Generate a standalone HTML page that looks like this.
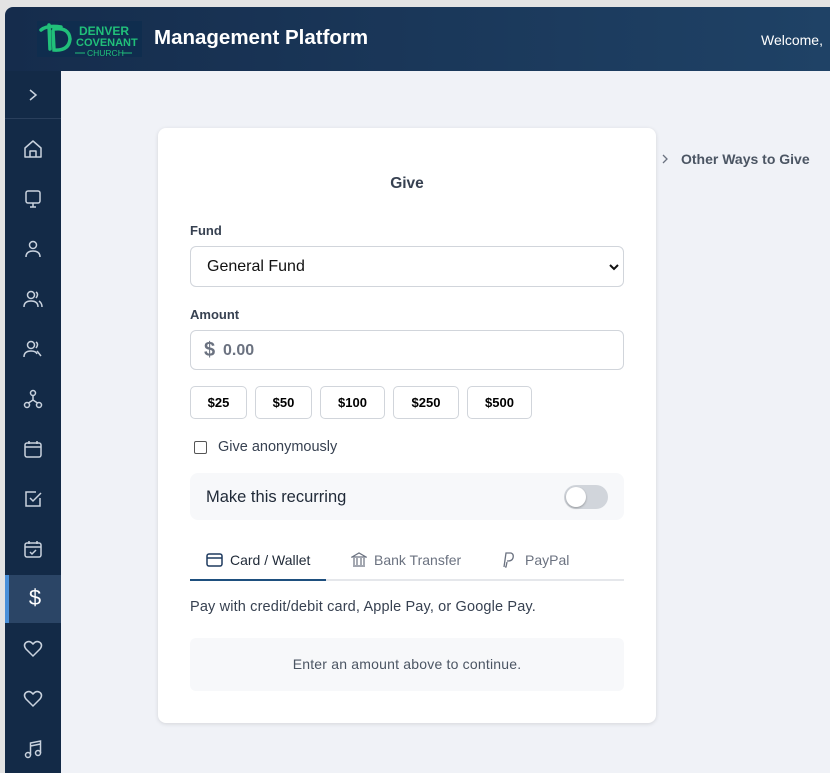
<!DOCTYPE html>
<html><head><meta charset="utf-8"><style>
*{box-sizing:border-box;margin:0;padding:0}
body{width:830px;height:773px;overflow:hidden;background:#e3e3e3;font-family:"Liberation Sans",sans-serif;position:relative}
.frame{position:absolute;left:5px;top:7px;right:0;bottom:0;background:#f0f2f7;border-top-left-radius:8px;overflow:hidden}
.hdr{position:absolute;left:0;top:0;right:0;height:64px;background:linear-gradient(90deg,#152c4c,#1f4266);}
.logo{position:absolute;left:32px;top:14px;width:105px;height:36px;background:#0f2d4e}
.title{position:absolute;left:149px;top:19px;color:#fff;font-weight:bold;font-size:20.5px}
.wel{position:absolute;left:756px;top:25px;color:#fff;font-size:14px}
.side{position:absolute;left:0;top:64px;width:56px;bottom:0;background:#132a47}
.side .tog{height:48px;border-bottom:1px solid #2a3f5c;display:flex;align-items:center;justify-content:center}
.card{position:absolute;left:153px;top:121px;width:498px;height:595px;background:#fff;border-radius:8px;box-shadow:0 1px 4px rgba(0,0,0,.12)}
.abs{position:absolute}
.lbl{font-size:13px;font-weight:bold;color:#374151}
.box{border:1px solid #d1d5db;border-radius:6px;background:#fff}
.btn{position:absolute;top:258px;height:33px;border:1px solid #d1d5db;border-radius:5px;font-size:13px;font-weight:bold;display:flex;align-items:center;justify-content:center;color:#000}
.other{position:absolute;left:656px;top:144px;font-size:14px;font-weight:bold;color:#4b5563}
</style></head><body>
<div class="frame">
<div class="hdr">
 <div class="logo">
  <svg width="105" height="36" viewBox="0 0 105 36"><path d="M4 9 Q10 4 24 6 M12 4 L13 28 M17 8 Q32 6 33 18 Q32 30 17 29 L16 10" fill="none" stroke="#21c07a" stroke-width="3.5" stroke-linecap="round"/>
  <text x="42" y="14" fill="#21c07a" font-size="12" font-weight="bold" font-family="Liberation Sans">DENVER</text>
  <text x="39" y="25" fill="#21c07a" font-size="11" font-weight="bold" font-family="Liberation Sans">COVENANT</text>
  <text x="50" y="35" fill="#21c07a" font-size="8.5" font-family="Liberation Sans">CHURCH</text>
  <path d="M38 32 H48 M85 32 H95" stroke="#21c07a"/></svg>
 </div>
 <div class="title">Management Platform</div>
 <div class="wel">Welcome,</div>
</div>
<div class="side">
 <div class="tog"><svg width="12" height="14"><path d="M3 2 L9 7 L3 12" fill="none" stroke="#c9d2de" stroke-width="1.5"/></svg></div>
</div>
<div class="card">
 <div class="abs" style="left:0;width:498px;top:47px;text-align:center;font-weight:bold;font-size:15.5px;color:#374151">Give</div>
 <div class="abs lbl" style="left:32px;top:95px">Fund</div>
 <div class="abs box" style="left:32px;top:118px;width:434px;height:41px"><span class="abs" style="left:16px;top:11px;font-size:16px;color:#111">General Fund</span><svg class="abs" style="right:4px;top:16px" width="10" height="8"><path d="M1 2 L5 6 L9 2" fill="none" stroke="#111" stroke-width="2"/></svg></div>
 <div class="abs lbl" style="left:32px;top:179px">Amount</div>
 <div class="abs box" style="left:32px;top:202px;width:434px;height:40px"><span class="abs" style="left:13px;top:8px;font-size:20px;font-weight:bold;color:#6b7280">$</span><span class="abs" style="left:32px;top:11px;font-size:16px;font-weight:bold;color:#6b7280">0.00</span></div>
 <div class="btn" style="left:32px;width:57px">$25</div>
 <div class="btn" style="left:97px;width:57px">$50</div>
 <div class="btn" style="left:162px;width:65px">$100</div>
 <div class="btn" style="left:235px;width:66px">$250</div>
 <div class="btn" style="left:309px;width:65px">$500</div>
 <div class="abs" style="left:36px;top:313px;width:13px;height:13px;border:1px solid #555;border-radius:2px"></div>
 <div class="abs" style="left:60px;top:311px;font-size:14.5px;color:#374151">Give anonymously</div>
 <div class="abs" style="left:32px;top:345px;width:434px;height:47px;background:#f7f8fa;border-radius:8px">
  <span class="abs" style="left:16px;top:15px;font-size:16.5px;color:#1f2937">Make this recurring</span>
  <div class="abs" style="left:374px;top:12px;width:44px;height:24px;border-radius:12px;background:#d1d5db"><div class="abs" style="left:2px;top:2px;width:20px;height:20px;border-radius:50%;background:#fff;box-shadow:0 1px 2px rgba(0,0,0,.3)"></div></div>
 </div>
 <div class="abs" style="left:32px;top:451px;width:434px;height:2px;background:#e5e7eb"></div>
 <div class="abs" style="left:32px;top:451px;width:136px;height:2px;background:#1e4f7e"></div>
 <svg class="abs" style="left:48px;top:425px" width="17" height="14"><rect x="1" y="1" width="15" height="12" rx="2" fill="none" stroke="#1e3a5f" stroke-width="1.5"/><path d="M1 5 H16" stroke="#1e3a5f" stroke-width="1.5"/></svg>
 <span class="abs" style="left:72px;top:424px;font-size:14px;color:#1f2937">Card / Wallet</span>
 <svg class="abs" style="left:193px;top:424px" width="16" height="16"><path d="M1 5 L8 1 L15 5 Z M2 14 H14 M3 6 V13 M6 6 V13 M10 6 V13 M13 6 V13" fill="none" stroke="#6b7280" stroke-width="1.2"/></svg>
 <span class="abs" style="left:216px;top:424px;font-size:14px;color:#6b7280">Bank Transfer</span>
 <svg class="abs" style="left:343px;top:423px" width="14" height="18"><path d="M3 16 L5 2 H10 Q13 3 12 7 Q11 10 7 10 H6 M4 16 H5 L6 11" fill="none" stroke="#6b7280" stroke-width="1.3"/></svg>
 <span class="abs" style="left:367px;top:424px;font-size:14px;color:#6b7280">PayPal</span>
 <div class="abs" style="left:32px;top:471px;font-size:14.5px;color:#374151;letter-spacing:0.15px">Pay with credit/debit card, Apple Pay, or Google Pay.</div>
 <div class="abs" style="left:32px;top:510px;width:434px;height:53px;background:#f7f8fa;border-radius:6px;text-align:center;line-height:53px;font-size:14px;color:#4b5563;letter-spacing:0.2px">Enter an amount above to continue.</div>
</div>
<svg class="abs" style="left:656px;top:146px" width="8" height="12"><path d="M2 2 L6 6 L2 10" fill="none" stroke="#6b7280" stroke-width="1.3"/></svg>
<div class="other" style="left:676px">Other Ways to Give</div>
</div>
<div id="icons" style="position:absolute;left:5px;top:0;width:56px;height:773px">
<svg class="abs" style="left:18px;top:139px" width="20" height="20" fill="none" stroke="#c9d2de" stroke-width="1.5" stroke-linejoin="round"><path d="M2 9 L10 2 L18 9 V18 H2 Z M7 18 V12 H13 V18"/></svg>
<svg class="abs" style="left:18px;top:189px" width="20" height="20" fill="none" stroke="#c9d2de" stroke-width="1.5"><rect x="3" y="2" width="14" height="12" rx="2"/><path d="M10 14 V18 M7 18 H13"/></svg>
<svg class="abs" style="left:18px;top:239px" width="20" height="20" fill="none" stroke="#c9d2de" stroke-width="1.5"><circle cx="10" cy="6" r="3.5"/><path d="M3 18 Q3 12 10 12 Q17 12 17 18"/></svg>
<svg class="abs" style="left:18px;top:289px" width="20" height="20" fill="none" stroke="#c9d2de" stroke-width="1.5"><circle cx="8" cy="6" r="3.5"/><path d="M1 18 Q1 12 8 12 Q15 12 15 18 M13 3 Q16 5 13 9 M16 12 Q19 14 19 18"/></svg>
<svg class="abs" style="left:18px;top:339px" width="20" height="20" fill="none" stroke="#c9d2de" stroke-width="1.5"><circle cx="8" cy="6" r="3.5"/><path d="M1 18 Q1 12 8 12 Q13 12 14 15 M13 3 Q16 5 13 9 M14 12 L18 17"/></svg>
<svg class="abs" style="left:18px;top:389px" width="20" height="20" fill="none" stroke="#c9d2de" stroke-width="1.5"><circle cx="10" cy="4" r="2.5"/><circle cx="4" cy="16" r="2.5"/><circle cx="16" cy="16" r="2.5"/><path d="M10 6.5 V11 L5.5 14 M10 11 L14.5 14"/></svg>
<svg class="abs" style="left:18px;top:439px" width="20" height="20" fill="none" stroke="#c9d2de" stroke-width="1.5"><rect x="2" y="4" width="16" height="14" rx="2"/><path d="M2 8 H18 M6 2 V5 M14 2 V5"/></svg>
<svg class="abs" style="left:18px;top:489px" width="20" height="20" fill="none" stroke="#c9d2de" stroke-width="1.5"><path d="M17 9 V17 H3 V3 H13 M7 9 L10 12 L18 4"/></svg>
<svg class="abs" style="left:18px;top:539px" width="20" height="20" fill="none" stroke="#c9d2de" stroke-width="1.5"><rect x="2" y="4" width="16" height="14" rx="2"/><path d="M2 8 H18 M6 2 V5 M14 2 V5 M7 13 L9 15 L13 11"/></svg>
<div class="abs" style="left:0;top:575px;width:56px;height:48px;background:#2b4566;border-left:4px solid #4a90d9"></div>
<div class="abs" style="left:0;top:585px;width:60px;text-align:center;color:#fff;font-size:22px">$</div>
<svg class="abs" style="left:18px;top:639px" width="20" height="20" fill="none" stroke="#c9d2de" stroke-width="1.5"><path d="M10 17 L3 10 Q0 6 3 3.5 Q6.5 1 10 5 Q13.5 1 17 3.5 Q20 6 17 10 Z"/></svg>
<svg class="abs" style="left:18px;top:689px" width="20" height="20" fill="none" stroke="#c9d2de" stroke-width="1.5"><path d="M10 17 L3 10 Q0 6 3 3.5 Q6.5 1 10 5 Q13.5 1 17 3.5 Q20 6 17 10 Z"/></svg>
<svg class="abs" style="left:18px;top:739px" width="20" height="20" fill="none" stroke="#c9d2de" stroke-width="1.5"><circle cx="5" cy="16" r="2.5"/><circle cx="15" cy="14" r="2.5"/><path d="M7.5 16 V4 L17.5 2 V14 M7.5 7 L17.5 5"/></svg>
</div>
</body></html>
